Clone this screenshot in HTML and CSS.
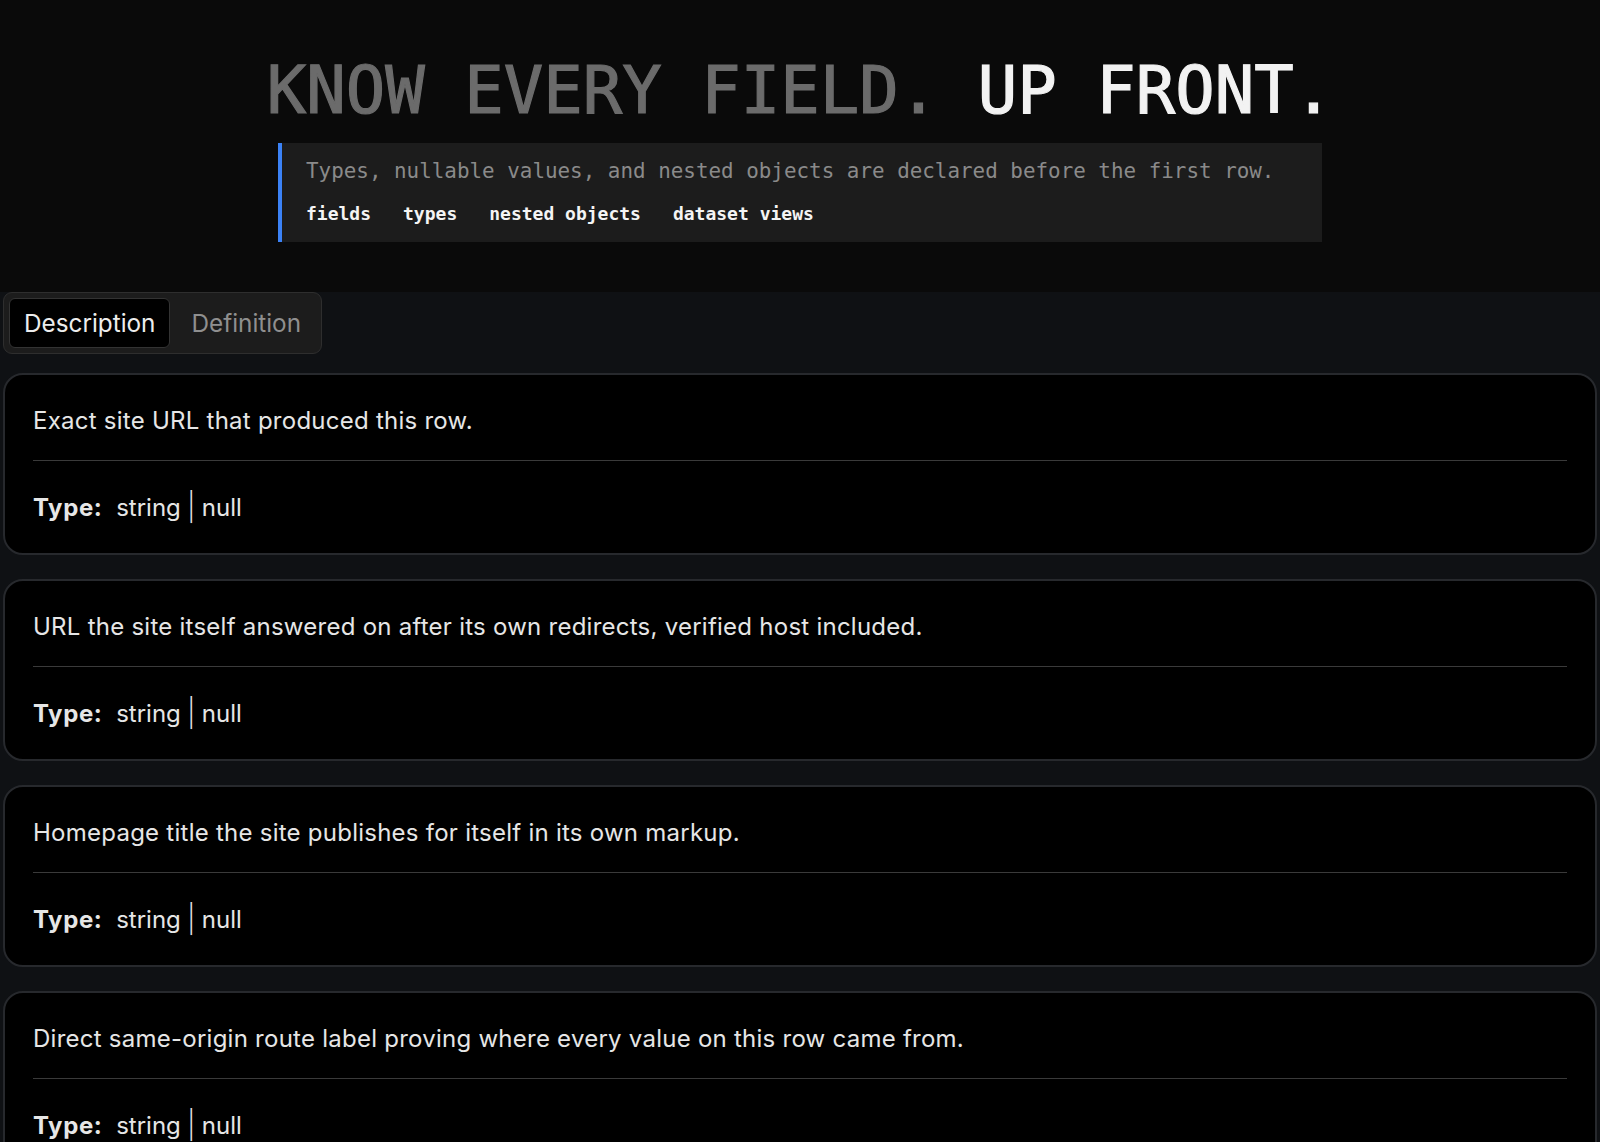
FILE: index.html
```html
<!DOCTYPE html>
<html lang="en">
<head>
<meta charset="utf-8">
<title>Know every field</title>
<link rel="stylesheet" href="styles.css">
</head>
<body>
<section class="hero">
  <h1 class="headline"><span class="dim">KNOW EVERY FIELD.</span> <span class="bright">UP FRONT.</span></h1>
  <div class="callout">
    <p class="callout-text">Types, nullable values, and nested objects are declared before the first row.</p>
    <ul class="tags">
      <li>fields</li>
      <li>types</li>
      <li>nested objects</li>
      <li>dataset views</li>
    </ul>
  </div>
</section>
<main class="schema">
  <div class="tabs">
    <button class="tab tab-active">Description</button>
    <button class="tab">Definition</button>
  </div>
  <div class="cards">
    <article class="card">
      <p class="card-desc">Exact site URL that produced this row.</p>
      <hr class="card-rule">
      <p class="card-type"><strong>Type:</strong> string <span class="pipe">|</span> null</p>
    </article>
    <article class="card">
      <p class="card-desc">URL the site itself answered on after its own redirects, verified host included.</p>
      <hr class="card-rule">
      <p class="card-type"><strong>Type:</strong> string <span class="pipe">|</span> null</p>
    </article>
    <article class="card">
      <p class="card-desc">Homepage title the site publishes for itself in its own markup.</p>
      <hr class="card-rule">
      <p class="card-type"><strong>Type:</strong> string <span class="pipe">|</span> null</p>
    </article>
    <article class="card">
      <p class="card-desc">Direct same-origin route label proving where every value on this row came from.</p>
      <hr class="card-rule">
      <p class="card-type"><strong>Type:</strong> string <span class="pipe">|</span> null</p>
    </article>
  </div>
</main>
</body>
</html>
```
FILE: styles.css
```css
* { box-sizing: border-box; }
html, body { margin: 0; padding: 0; }
body {
  background: #0f1114;
  font-family: Inter, "Noto Sans", sans-serif;
  color: #e6e6e6;
}
.hero {
  background: #0a0a0a;
  padding: 57px 0 50px;
  display: flex;
  flex-direction: column;
  align-items: center;
}
.headline {
  margin: 0;
  font-family: "DejaVu Sans Mono", "Liberation Mono", monospace;
  font-size: 65.6px;
  line-height: 66px;
  font-weight: 400;
  -webkit-text-stroke: 1.2px currentColor;
  white-space: nowrap;
}
.dim { color: #6b6b6b; }
.bright { color: #f2f2f2; }
.callout {
  margin-top: 20px;
  width: 1044px;
  background: #1c1c1c;
  border-left: 4px solid #3b82f6;
  padding: 16px 24px 17px;
}
.callout-text {
  margin: 0;
  font-family: "DejaVu Sans Mono", "Liberation Mono", monospace;
  font-size: 20.9px;
  line-height: 25px;
  color: #8a8a8a;
}
.tags {
  list-style: none;
  margin: 19px 0 0;
  padding: 0;
  display: flex;
  gap: 32px;
  font-family: "DejaVu Sans Mono", "Liberation Mono", monospace;
  font-size: 18px;
  line-height: 22px;
  font-weight: 700;
  color: #f4f4f4;
}
.schema {
  padding: 0 3px;
}
.tabs {
  display: inline-flex;
  gap: 6px;
  padding: 5px;
  background: #1c1c1c;
  border: 1px solid #2e2e2e;
  border-radius: 9px;
}
.tab {
  font-family: Inter, "Noto Sans", sans-serif;
  font-size: 24.3px;
  height: 50px;
  padding: 0 14px;
  background: transparent;
  border: 1px solid transparent;
  border-radius: 6px;
  color: #8f8f8f;
  cursor: pointer;
}
.tab-active {
  background: #000;
  border-color: #333;
  color: #ededed;
}
.cards {
  margin-top: 19px;
  display: flex;
  flex-direction: column;
  gap: 24px;
}
.card {
  background: #000;
  border: 2px solid #27292d;
  border-radius: 20px;
  padding: 29px 28px 28px;
}
.card-desc {
  margin: 0;
  font-size: 24px;
  letter-spacing: 0.25px;
  line-height: 34px;
  color: #e6e6e6;
}
.card-rule {
  margin: 22px 0 30px;
  border: 0;
  height: 1px;
  background: #3a3a3a;
}
.card-type {
  margin: 0;
  font-size: 24px;
  line-height: 34px;
  color: #e6e6e6;
}
.card-type strong {
  font-weight: 700;
  letter-spacing: 0.6px;
  margin-right: 7px;
}
.pipe {
  display: inline-block;
  font-weight: 300;
  transform: scaleY(1.15);
}
```
